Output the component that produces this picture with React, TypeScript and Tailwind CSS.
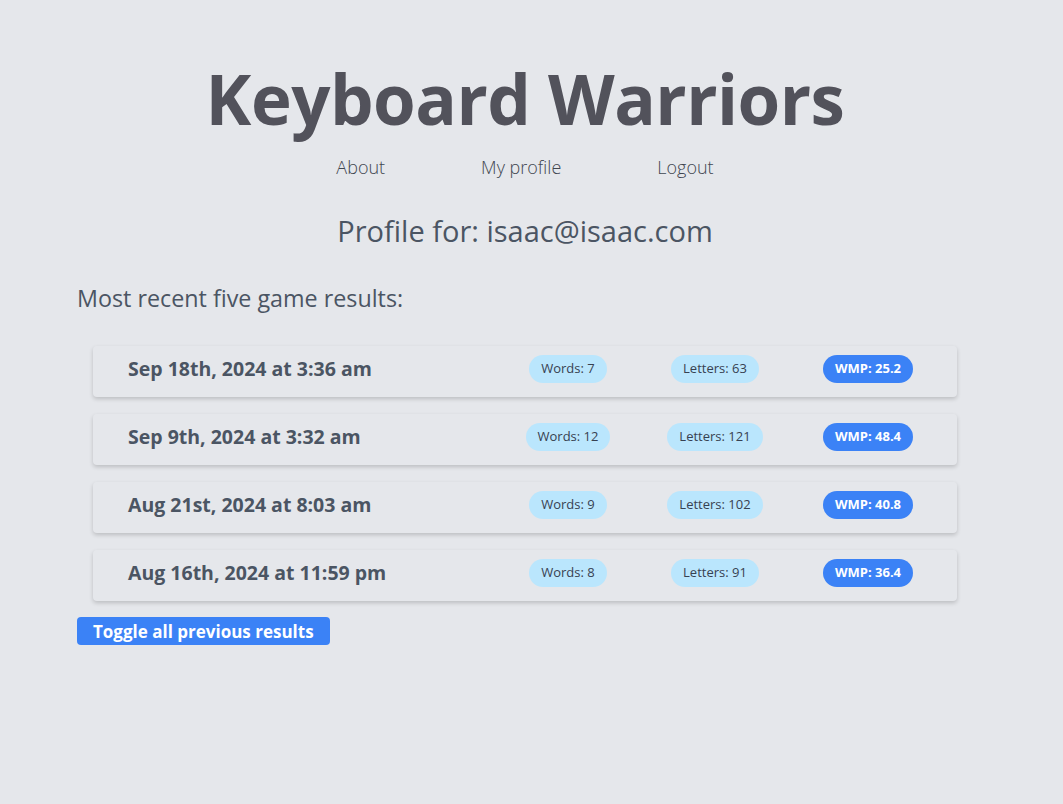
import React from 'react';

const results = [
  { date: 'Sep 18th, 2024 at 3:36 am', words: 7, letters: 63, wmp: '25.2' },
  { date: 'Sep 9th, 2024 at 3:32 am', words: 12, letters: 121, wmp: '48.4' },
  { date: 'Aug 21st, 2024 at 8:03 am', words: 9, letters: 102, wmp: '40.8' },
  { date: 'Aug 16th, 2024 at 11:59 pm', words: 8, letters: 91, wmp: '36.4' },
];

const App: React.FC = () => {
  return (
    <div className="min-h-[804px] bg-[#e5e7eb] pr-[13px] text-[#4b5563] font-['Open_Sans',sans-serif]">
      <div className="flex flex-col items-center pt-[54px]">
        <h1 className="text-[69px] font-bold leading-[88px] text-[#52525b] tracking-[-0.5px]">Keyboard Warriors</h1>
        <nav className="flex gap-24 text-[18px] font-light mt-[12px] leading-[26px] text-[#3f4650]">
          <a className="cursor-pointer">About</a>
          <a className="cursor-pointer">My profile</a>
          <a className="cursor-pointer">Logout</a>
        </nav>
        <h2 className="text-[29px] mt-[33px] leading-[36px]">Profile for: isaac@isaac.com</h2>
      </div>

      <div className="mx-auto w-[896px] mt-[34px]">
        <h3 className="text-[23.3px] leading-[30px]">Most recent five game results:</h3>
        <div className="flex flex-col gap-[17px] mt-[33px] px-4">
          {results.map((r) => (
            <div
              key={r.date}
              className="grid grid-cols-[1fr_144px_150px_156px] items-center h-[51px] pl-[35px] pr-[11px] pb-[6px] rounded-sm shadow-[0_2px_4px_rgba(0,0,0,0.18)]"
            >
              <span className="text-[19.5px] font-bold">{r.date}</span>
              <div className="flex justify-center">
                <span className="rounded-full bg-[#bae6fd] px-3 h-[28px] flex items-center text-[13px] font-medium text-[#374151]">Words: {r.words}</span>
              </div>
              <div className="flex justify-center">
                <span className="rounded-full bg-[#bae6fd] px-3 h-[28px] flex items-center text-[13px] font-medium text-[#374151]">Letters: {r.letters}</span>
              </div>
              <div className="flex justify-center">
                <span className="rounded-full bg-[#3b82f6] px-3 h-[28px] flex items-center text-[13px] font-bold text-white">WMP: {r.wmp}</span>
              </div>
            </div>
          ))}
        </div>
        <button className="mt-[16px] bg-[#3b82f6] text-white font-bold text-[17px] h-[28px] px-4 rounded-sm leading-none">
          Toggle all previous results
        </button>
      </div>
    </div>
  );
};

export default App;
